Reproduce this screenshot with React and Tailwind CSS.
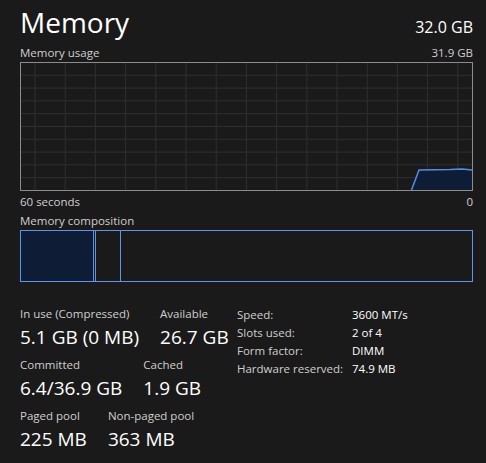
const gridX = Array.from({ length: 15 }, (_, i) => 15 + i * 30.2);
const gridY = Array.from({ length: 9 }, (_, i) => 12.8 * (i + 1));

const MemoryGraph = () => (
    <svg width="453" height="129" viewBox="0 0 453 129" className="block">
        {gridX.map((x) => (
            <line key={`v${x}`} x1={x} y1="0" x2={x} y2="129" stroke="#2f2f2f" strokeWidth="1" />
        ))}
        {gridY.map((y) => (
            <line key={`h${y}`} x1="0" y1={y + 0.5} x2="453" y2={y + 0.5} stroke="#2f2f2f" strokeWidth="1" />
        ))}
        <path d="M391.5 128 L399 108 L430 107.5 L442 107 L452 108 L452 128 Z" fill="#0e1d35" />
        <path d="M391.5 128 L399 108 L430 107.5 L442 107 L452 108" fill="none" stroke="#4f8fe6" strokeWidth="1.5" />
        <rect x="0.5" y="0.5" width="452" height="128" fill="none" stroke="#8c8c8c" strokeWidth="1" />
    </svg>
);

const Stat = ({ label, value }) => (
    <div className="flex flex-col">
        <span className="text-[11.5px] leading-[16px] text-[#cfcfcf]">{label}</span>
        <span className="text-[19px] leading-[26px] text-white mt-[2px]">{value}</span>
    </div>
);

const specs = [
    ["Speed:", "3600 MT/s"],
    ["Slots used:", "2 of 4"],
    ["Form factor:", "DIMM"],
    ["Hardware reserved:", "74.9 MB"],
];

export default function App() {
    return (
        <div
            className="w-[486px] h-[463px] bg-[#1a1a1a] text-white pl-[20px] pr-[13px] overflow-hidden"
            style={{ fontFamily: '"Open Sans", "Noto Sans", sans-serif' }}
        >
            <div className="flex justify-between items-end pt-[3px]">
                <span className="text-[28px] leading-[38px]">Memory</span>
                <span className="text-[16px] leading-[22px] mb-[3px]">32.0 GB</span>
            </div>
            <div className="flex justify-between text-[11.5px] leading-[16px] text-[#cfcfcf] mt-[4px]">
                <span>Memory usage</span>
                <span>31.9 GB</span>
            </div>
            <div className="mt-[1px]">
                <MemoryGraph />
            </div>
            <div className="flex justify-between text-[11.5px] leading-[16px] text-[#cfcfcf] mt-[3px]">
                <span>60 seconds</span>
                <span>0</span>
            </div>
            <div className="text-[11.5px] leading-[16px] text-[#cfcfcf] mt-[3px]">Memory composition</div>
            <div className="mt-[1px] h-[52px] border border-[#5a96ea] flex">
                <div className="w-[72px] bg-[#0e1d35]"></div>
                <div className="w-[2px] border-l border-[#5a96ea]"></div>
                <div className="w-[26px] border-l border-r border-[#5a96ea]"></div>
                <div className="flex-1"></div>
            </div>
            <div className="flex items-start mt-[24px]">
                <div className="w-[217px] flex flex-col gap-[7px]">
                    <div className="flex gap-[21px]">
                        <Stat label="In use (Compressed)" value="5.1 GB (0 MB)" />
                        <Stat label="Available" value="26.7 GB" />
                    </div>
                    <div className="flex gap-[21px]">
                        <Stat label="Committed" value="6.4/36.9 GB" />
                        <Stat label="Cached" value="1.9 GB" />
                    </div>
                    <div className="flex gap-[21px]">
                        <Stat label="Paged pool" value="225 MB" />
                        <Stat label="Non-paged pool" value="363 MB" />
                    </div>
                </div>
                <div className="grid grid-cols-[115px_1fr] content-start text-[11.5px] leading-[18px]">
                    {specs.map(([k, v]) => (
                        <div key={k} className="contents">
                            <span className="text-[#cfcfcf]">{k}</span>
                            <span className="text-white">{v}</span>
                        </div>
                    ))}
                </div>
            </div>
        </div>
    );
}
